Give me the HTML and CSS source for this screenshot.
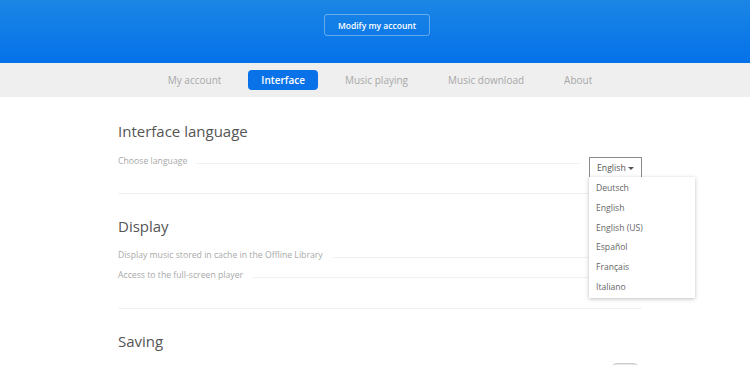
FILE: index.html
```html
<!DOCTYPE html>
<html lang="en">
<head>
    <meta charset="UTF-8">
    <title>Settings - Interface</title>
    <link rel="stylesheet" href="styles.css">
</head>
<body>
    <div class="banner">
        <button class="banner-btn">Modify my account</button>
    </div>
    <nav class="tabs">
        <a class="tab">My account</a>
        <a class="tab active">Interface</a>
        <a class="tab">Music playing</a>
        <a class="tab">Music download</a>
        <a class="tab">About</a>
    </nav>

    <main class="content">
        <section class="block first">
            <h2 class="block-title">Interface language</h2>
            <div class="row select-row">
                <span class="row-label">Choose language</span>
                <span class="row-line"></span>
                <div class="select">
                    <button class="select-btn">English <span class="caret"></span></button>
                    <ul class="select-menu">
                        <li>Deutsch</li>
                        <li>English</li>
                        <li>English (US)</li>
                        <li>Español</li>
                        <li>Français</li>
                        <li>Italiano</li>
                    </ul>
                </div>
            </div>
        </section>

        <section class="block">
            <h2 class="block-title">Display</h2>
            <div class="row">
                <span class="row-label">Display music stored in cache in the Offline Library</span>
                <span class="row-line"></span>
                <span class="toggle on"></span>
            </div>
            <div class="row">
                <span class="row-label">Access to the full-screen player</span>
                <span class="row-line"></span>
                <span class="toggle"></span>
            </div>
        </section>

        <section class="block last">
            <h2 class="block-title">Saving</h2>
            <div class="row">
                <span class="row-spacer"></span>
                <span class="toggle"></span>
            </div>
        </section>
    </main>
</body>
</html>
```

FILE: styles.css
```css
* {
    margin: 0;
    padding: 0;
    box-sizing: border-box;
}

body {
    font-family: "Open Sans", "Liberation Sans", sans-serif;
    background: #fff;
    color: #555;
    overflow: hidden;
}

.banner {
    height: 63px;
    background: linear-gradient(#1b86e4, #0471ea);
    display: flex;
    justify-content: center;
    padding-top: 14px;
    padding-left: 4px;
}

.banner-btn {
    height: 22px;
    width: 106px;
    background: transparent;
    border: 1px solid rgba(255, 255, 255, 0.35);
    border-radius: 3px;
    color: #fff;
    font-family: inherit;
    font-size: 8.5px;
    font-weight: 600;
}

.tabs {
    height: 34px;
    background: #efefef;
    display: flex;
    justify-content: center;
    align-items: center;
    gap: 14px;
    padding-left: 10px;
}

.tab {
    font-size: 10px;
    color: #a8a8a8;
    padding: 0 13px;
    line-height: 20px;
    border-radius: 4px;
}

.tab.active {
    background: #0a72e8;
    color: #fff;
    font-weight: 600;
}

.content {
    width: 524px;
    margin: 0 auto;
    position: relative;
    left: 5px;
    padding-top: 23px;
}

.block {
    border-bottom: 1px solid #f0f0f0;
    padding: 21px 0 23px;
}

.block.first {
    padding: 0 0 16px;
}

.block.last {
    border-bottom: none;
}

.block-title {
    font-size: 15px;
    font-weight: 400;
    color: #555;
    line-height: 22px;
    margin-bottom: 8px;
}

.row {
    display: flex;
    align-items: center;
    gap: 10px;
    height: 20px;
}

.select-row {
    align-items: flex-start;
    height: 23px;
    margin-top: 12px;
}

.row-label {
    font-size: 8.7px;
    line-height: 14px;
    color: #a9a9a9;
    white-space: nowrap;
}

.row-line {
    flex: 1;
    border-bottom: 1px solid #f1f1f1;
    margin-top: 4px;
}

.row-spacer {
    flex: 1;
}

.select-row .row-line {
    margin-top: 0;
    height: 10px;
}

.select {
    position: relative;
}

.select-btn {
    width: 53px;
    height: 23px;
    background: #fff;
    border: 1px solid #8a8a8a;
    font-family: inherit;
    font-size: 8.7px;
    color: #555;
}

.caret {
    display: inline-block;
    border-left: 3px solid transparent;
    border-right: 3px solid transparent;
    border-top: 3px solid #555;
    vertical-align: middle;
}

.select-menu {
    position: absolute;
    top: 23px;
    left: 0;
    width: 106px;
    background: #fff;
    list-style: none;
    box-shadow: 0 1px 4px rgba(0, 0, 0, 0.25);
    padding: 2px 0 0;
    z-index: 5;
}

.select-menu li {
    font-size: 8.6px;
    color: #666;
    padding: 0 7px;
    line-height: 19.8px;
}

.toggle {
    width: 30px;
    height: 14px;
    border-radius: 7px;
    border: 1px solid #ccc;
    background: #e8e8e8;
    margin-right: 2px;
}

.toggle.on {
    background: #0a72e8;
    border-color: #0a72e8;
}
```
